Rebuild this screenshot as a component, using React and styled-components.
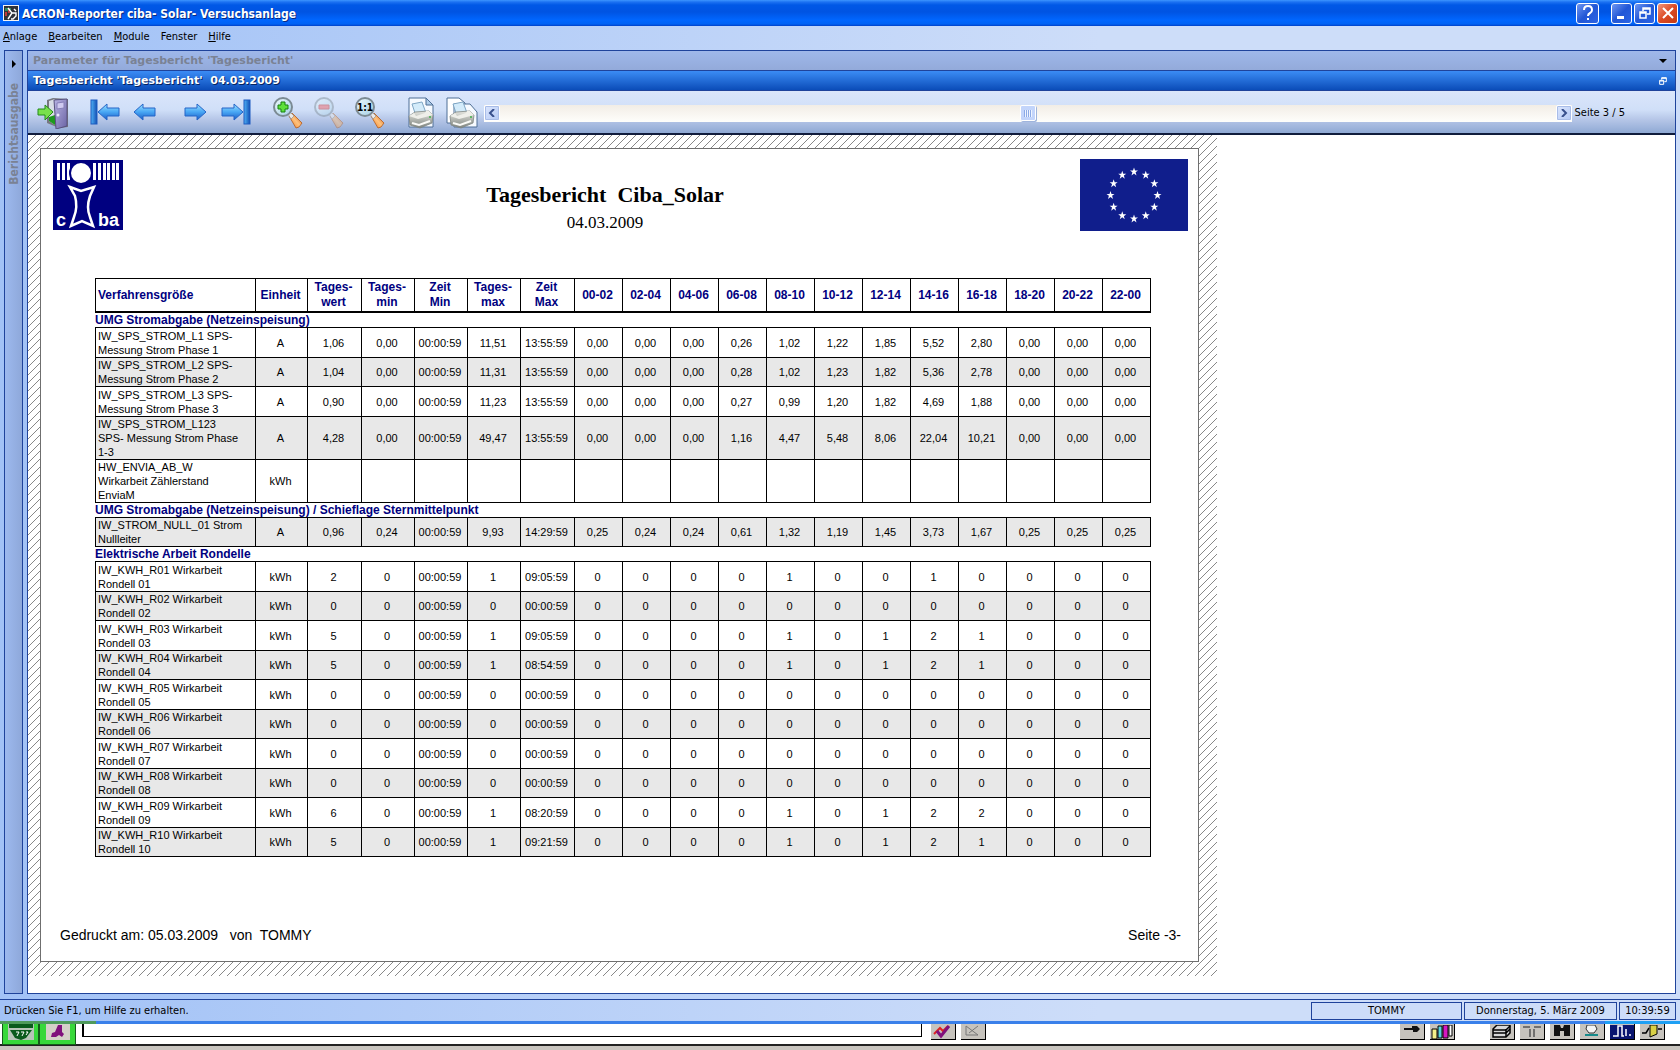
import React from "react";
import styled, { createGlobalStyle, css } from "styled-components";

const COLORS = {
  line: "#1f439b",
  navy: "#000080",
  shade: "#e8e8e8",
  muted: "#7a8294",
};
const UI_FONT = `"DejaVu Sans Condensed", "DejaVu Sans", sans-serif`;
const WIDE_FONT = `"DejaVu Sans", Verdana, sans-serif`;
const PRINT_FONT = `"Liberation Sans", Arial, sans-serif`;
const SERIF_FONT = `"Liberation Serif", "Times New Roman", serif`;

const menu = [
  { key: "A", rest: "nlage" },
  { key: "B", rest: "earbeiten" },
  { key: "M", rest: "odule" },
  { key: "", rest: "Fenster" },
  { key: "H", rest: "ilfe" },
];

const columns = [
  { label: ["Verfahrensgröße"], width: 161 },
  { label: ["Einheit"], width: 52 },
  { label: ["Tages-", "wert"], width: 54 },
  { label: ["Tages-", "min"], width: 53 },
  { label: ["Zeit", "Min"], width: 53 },
  { label: ["Tages-", "max"], width: 53 },
  { label: ["Zeit", "Max"], width: 54 },
  ...[
    "00-02",
    "02-04",
    "04-06",
    "06-08",
    "08-10",
    "10-12",
    "12-14",
    "14-16",
    "16-18",
    "18-20",
    "20-22",
    "22-00",
  ].map((h) => ({ label: [h], width: 48 })),
];

const empty = Array(17).fill("");

const groups = [
  {
    title: "UMG Stromabgabe (Netzeinspeisung)",
    rows: [
      {
        name: ["IW_SPS_STROM_L1 SPS-", "Messung Strom Phase 1"],
        unit: "A",
        values:
          "1,06 0,00 00:00:59 11,51 13:55:59 0,00 0,00 0,00 0,26 1,02 1,22 1,85 5,52 2,80 0,00 0,00 0,00".split(" "),
      },
      {
        name: ["IW_SPS_STROM_L2 SPS-", "Messung Strom Phase 2"],
        unit: "A",
        shaded: true,
        values:
          "1,04 0,00 00:00:59 11,31 13:55:59 0,00 0,00 0,00 0,28 1,02 1,23 1,82 5,36 2,78 0,00 0,00 0,00".split(" "),
      },
      {
        name: ["IW_SPS_STROM_L3 SPS-", "Messung Strom Phase 3"],
        unit: "A",
        values:
          "0,90 0,00 00:00:59 11,23 13:55:59 0,00 0,00 0,00 0,27 0,99 1,20 1,82 4,69 1,88 0,00 0,00 0,00".split(" "),
      },
      {
        name: ["IW_SPS_STROM_L123", "SPS- Messung Strom Phase", "1-3"],
        unit: "A",
        shaded: true,
        values:
          "4,28 0,00 00:00:59 49,47 13:55:59 0,00 0,00 0,00 1,16 4,47 5,48 8,06 22,04 10,21 0,00 0,00 0,00".split(" "),
      },
      {
        name: ["HW_ENVIA_AB_W", "Wirkarbeit Zählerstand", "EnviaM"],
        unit: "kWh",
        values: empty,
      },
    ],
  },
  {
    title: "UMG Stromabgabe (Netzeinspeisung) / Schieflage Sternmittelpunkt",
    rows: [
      {
        name: ["IW_STROM_NULL_01 Strom", "Nullleiter"],
        unit: "A",
        shaded: true,
        values:
          "0,96 0,24 00:00:59 9,93 14:29:59 0,25 0,24 0,24 0,61 1,32 1,19 1,45 3,73 1,67 0,25 0,25 0,25".split(" "),
      },
    ],
  },
  {
    title: "Elektrische Arbeit Rondelle",
    rows: [
      "2 0 00:00:59 1 09:05:59 0 0 0 0 1 0 0 1 0 0 0 0",
      "0 0 00:00:59 0 00:00:59 0 0 0 0 0 0 0 0 0 0 0 0",
      "5 0 00:00:59 1 09:05:59 0 0 0 0 1 0 1 2 1 0 0 0",
      "5 0 00:00:59 1 08:54:59 0 0 0 0 1 0 1 2 1 0 0 0",
      "0 0 00:00:59 0 00:00:59 0 0 0 0 0 0 0 0 0 0 0 0",
      "0 0 00:00:59 0 00:00:59 0 0 0 0 0 0 0 0 0 0 0 0",
      "0 0 00:00:59 0 00:00:59 0 0 0 0 0 0 0 0 0 0 0 0",
      "0 0 00:00:59 0 00:00:59 0 0 0 0 0 0 0 0 0 0 0 0",
      "6 0 00:00:59 1 08:20:59 0 0 0 0 1 0 1 2 2 0 0 0",
      "5 0 00:00:59 1 09:21:59 0 0 0 0 1 0 1 2 1 0 0 0",
    ].map((line, i) => {
      const no = String(i + 1).padStart(2, "0");
      return {
        name: [`IW_KWH_R${no} Wirkarbeit`, `Rondell ${no}`],
        unit: "kWh",
        shaded: i % 2 === 1,
        values: line.split(" "),
      };
    }),
  },
];

/* ================= ICONS ================== */

const AppIcon = () => (
  <svg width="16" height="16" viewBox="0 0 16 16" aria-hidden="true">
    <rect width="16" height="16" fill="#f4f4f4" />
    <rect x="1" y="1" width="14" height="14" fill="#30343a" />
    <path d="M2 3h6v3H2z" fill="#2f8a5c" />
    <path d="M2 7h2v4H2zM5 4h2v4H5z" fill="#c03a3a" />
    <path d="M5 3l4 5-4 6M9 8h4v3l-3 3H8M11 4l2 2" fill="none" stroke="#fff" strokeWidth="1.4" />
  </svg>
);

const Gradients = () => (
  <defs>
    <linearGradient id="blueArrow" x1="0" y1="0" x2="0" y2="1">
      <stop offset="0" stopColor="#9be2ff" />
      <stop offset="0.5" stopColor="#48a6f4" />
      <stop offset="1" stopColor="#1b5cc4" />
    </linearGradient>
    <linearGradient id="blueBar" x1="0" y1="0" x2="1" y2="0">
      <stop offset="0" stopColor="#4fb2f6" />
      <stop offset="1" stopColor="#1450b4" />
    </linearGradient>
    <linearGradient id="door" x1="0" y1="0" x2="1" y2="1">
      <stop offset="0" stopColor="#b9b4e4" />
      <stop offset="1" stopColor="#6a63a4" />
    </linearGradient>
    <linearGradient id="glass" x1="0" y1="0" x2="1" y2="1">
      <stop offset="0" stopColor="#edf8fc" />
      <stop offset="1" stopColor="#a5d0e6" />
    </linearGradient>
    <linearGradient id="handle" x1="0" y1="1" x2="1" y2="0">
      <stop offset="0" stopColor="#f0781a" />
      <stop offset="0.5" stopColor="#ffc27c" />
      <stop offset="1" stopColor="#c94f08" />
    </linearGradient>
    <linearGradient id="metal" x1="0" y1="0" x2="0" y2="1">
      <stop offset="0" stopColor="#e6e6e0" />
      <stop offset="1" stopColor="#7f8580" />
    </linearGradient>
  </defs>
);

const Exit = () => (
  <>
    <path d="M10 3l6-2 15 1v28l-9 1-12-5z" fill="#77777f" />
    <path d="M12 4l6-2v26l-6-4z" fill="#d8dde6" />
    <path d="M12 20l6-2v10l-6-4z" fill="#1d9a1d" />
    <path d="M17 3l13-1v27l-11 3z" fill="url(#door)" stroke="#58527f" />
    <path d="M20 6l7-1v6l-7 1z" fill="#cfcaf0" stroke="#8780b8" />
    <circle cx="21" cy="18" r="1.5" fill="#e9e6fa" />
    <path d="M1 12h7V8l8 7-8 8v-5H1z" fill="#79e04c" stroke="#258a1a" />
  </>
);
const Prev = () => (
  <path d="M14 7L5 15l9 8v-4h12v-8H14z" fill="url(#blueArrow)" stroke="#2565c8" />
);
const Next = () => (
  <path d="M17 7l9 8-9 8v-4H5v-8h12z" fill="url(#blueArrow)" stroke="#2565c8" />
);
const First = () => (
  <>
    <rect x="3" y="3" width="6" height="24" fill="url(#blueBar)" stroke="#1c5abf" />
    <path d="M19 7l-9 8 9 8v-4h12v-8H19z" fill="url(#blueArrow)" stroke="#2565c8" />
  </>
);
const Last = () => (
  <>
    <rect x="23" y="3" width="6" height="24" fill="url(#blueBar)" stroke="#1c5abf" />
    <path d="M13 7l9 8-9 8v-4H1v-8h12z" fill="url(#blueArrow)" stroke="#2565c8" />
  </>
);
const Lens = ({ children }) => (
  <>
    <path d="M17 19l3-3 10 10-3 4-3 1z" fill="url(#handle)" stroke="#b35a1c" strokeWidth="0.8" />
    <path d="M16 17l2-2 4 4-3 3z" fill="#e9e9e9" stroke="#888" strokeWidth="0.6" />
    <circle cx="11" cy="10" r="9" fill="url(#glass)" stroke="#7c8b94" strokeWidth="2" />
    {children}
  </>
);
const ZoomIn = () => (
  <Lens>
    <path d="M9 5h4v3h3v4h-3v3H9v-3H6V8h3z" fill="#5de03a" stroke="#16810f" />
  </Lens>
);
const ZoomOut = () => (
  <g opacity="0.45">
    <Lens>
      <path d="M6 8h10v4H6z" fill="#f25858" stroke="#c23030" />
    </Lens>
  </g>
);
const ZoomReset = () => (
  <Lens>
    <text x="11" y="14" textAnchor="middle" fontFamily={UI_FONT} fontWeight="700" fontSize="10">
      1:1
    </text>
  </Lens>
);
const PrinterBody = () => (
  <>
    <path d="M7 7l10-2 4 11-10 3z" fill="#d3ebfa" stroke="#7fa6c4" />
    <path d="M4 19l6-4 14-1 4 4-1 8-12 5-10-3z" fill="url(#metal)" stroke="#7f8581" strokeWidth="0.8" />
    <path d="M4 19l9 3 15-4-4-4-3 0-1 2-9 3-2-3z" fill="#efefea" />
    <path d="M7 26l7 2 11-4" fill="none" stroke="#fbfbf8" strokeWidth="2" />
    <circle cx="25" cy="20" r="1" fill="#41b04a" />
  </>
);
const Print = () => (
  <>
    <path d="M4 1h17l7 7v22H4z" fill="#f6faff" stroke="#4f6f96" />
    <path d="M21 1v7h7z" fill="#aecdea" stroke="#4f6f96" />
    <PrinterBody />
  </>
);
const PrintAll = () => (
  <>
    <path d="M1 1h12l6 5v20H1z" fill="#fff" stroke="#4f6f96" />
    <path d="M8 7h16l7 8v15H8z" fill="#f6faff" stroke="#4f6f96" />
    <PrinterBody />
  </>
);

const tools = [
  [{ title: "Schließen", icon: Exit }],
  [
    { title: "Erste Seite", icon: First },
    { title: "Vorherige Seite", icon: Prev },
  ],
  [
    { title: "Nächste Seite", icon: Next },
    { title: "Letzte Seite", icon: Last },
  ],
  [
    { title: "Vergrößern", icon: ZoomIn },
    { title: "Verkleinern", icon: ZoomOut },
    { title: "Originalgröße", icon: ZoomReset },
  ],
  [
    { title: "Seite drucken", icon: Print },
    { title: "Alles drucken", icon: PrintAll },
  ],
];

const RestoreGlyph = ({ size = 12 }) => (
  <svg width={size} height={size} viewBox="0 0 12 12" aria-hidden="true">
    <path d="M4 4V1h7v6H8M4 2h7M1 5h6v6H1zM1 6h6" fill="none" stroke="#fff" strokeWidth="1.5" />
  </svg>
);

const CibaLogo = () => (
  <svg width="70" height="70" viewBox="0 0 70 70" role="img" aria-label="ciba">
    <rect width="70" height="70" fill="#000080" />
    <g fill="#fff">
      {[4, 9, 14, 40, 45, 50, 54, 59, 63].map((x) => (
        <rect key={x} x={x} y="3" width="3" height="17" />
      ))}
      <circle cx="28" cy="13" r="12" fill="#000080" />
      <circle cx="28" cy="13" r="10" />
    </g>
    <path
      d="M17 27L28 31L41 27L37 36Q33 48 37 57L40 66L29 61L18 66L21 57Q25 47 22 36z"
      fill="none"
      stroke="#fff"
      strokeWidth="2.5"
    />
    <g fill="#fff" fontFamily={PRINT_FONT} fontWeight="700" fontSize="18">
      <text x="3" y="66">c</text>
      <text x="45" y="66">ba</text>
    </g>
  </svg>
);

const STAR = "0,-4 1,-1 4,-1 1.6,0.8 2.5,4 0,2 -2.5,4 -1.6,0.8 -4,-1 -1,-1";
const EuFlag = () => (
  <svg width="108" height="72" viewBox="0 0 108 72" role="img" aria-label="Europaflagge">
    <rect width="108" height="72" fill="#101e8c" />
    {Array.from({ length: 12 }, (_, i) => {
      const a = (i * Math.PI) / 6;
      return (
        <polygon
          key={i}
          points={STAR}
          fill="#fff"
          transform={`translate(${54 + 23.5 * Math.sin(a)} ${36 - 23.5 * Math.cos(a)})`}
        />
      );
    })}
  </svg>
);

// icons of the window behind, only their lower part is visible
const dockIcons = {
  chart: (
    <>
      <path d="M3 9l6-6 3 3 5-5" fill="none" stroke="#d22" strokeWidth="2" />
      <path d="M6 6l4 5 8-10" fill="none" stroke="#80107c" strokeWidth="3" />
    </>
  ),
  chartOff: <path d="M5 1v9h12M5 1l12 9M17 1l-9 7" fill="none" stroke="#777" />,
  key: <path d="M4 3h8V1h5l3 3-3 3h-4V5H4z" fill="#111" />,
  books: (
    <>
      <path d="M2 4h5v10H2z" fill="#f4f08a" stroke="#000" />
      <path d="M8 1h4v12H8z" fill="#57d6e0" stroke="#000" />
      <path d="M13 0h5v13h-5z" fill="#d618c0" stroke="#000" />
      <path d="M19 0h3v11h-3z" fill="#fff" stroke="#000" />
    </>
  ),
  printer: (
    <>
      <path d="M3 4l4-4h13v8l-4 4H3z" fill="#d8d8d8" stroke="#000" strokeWidth="1.5" />
      <path d="M3 5h13l4-4M3 8h13l4-4M16 4v8" fill="none" stroke="#000" strokeWidth="1.5" />
    </>
  ),
  cross: <path d="M3 2h7m4 0h7M10 4v8m4-8v8" fill="none" stroke="#555" strokeWidth="1.5" />,
  find: <path d="M4 0h6l1 3h2l1-3h6v11h-6V6h-4v5H4z" fill="#111" />,
  user: (
    <>
      <path d="M7 0h8l2 4-3 4H9L6 4z" fill="#f4f4f4" stroke="#333" />
      <path d="M5 10h13" stroke="#178a8a" strokeWidth="2" />
    </>
  ),
  pulse: (
    <>
      <path d="M0 0h24v14H0z" fill="#0a1670" />
      <path d="M3 11h5V1h4v10h2M16 4v7M20 9v2" fill="none" stroke="#fff" strokeWidth="1.5" />
    </>
  ),
  exit: (
    <>
      <path d="M10 0h7v9l-7 3z" fill="#d8d046" stroke="#000" />
      <path d="M2 8h4l3-5M18 4h4" fill="none" stroke="#000" strokeWidth="1.5" />
    </>
  ),
};

const DockIcon = ({ name, title }) => (
  <DockButton type="button" aria-label={title}>
    <svg width="24" height="14" viewBox="0 0 24 14" aria-hidden="true">
      {dockIcons[name]}
    </svg>
  </DockButton>
);

/* ================= REPORT ================== */

const Lines = ({ items }) =>
  items.map((text, i) => (
    <React.Fragment key={text}>
      {i > 0 && <br />}
      {text}
    </React.Fragment>
  ));

function Report() {
  return (
    <Paper>
      <PaperHead>
        <CibaLogo />
        <Heading>
          <h1>{"Tagesbericht  Ciba_Solar"}</h1>
          <p>04.03.2009</p>
        </Heading>
        <EuFlag />
      </PaperHead>
      <Table>
        <colgroup>
          {columns.map(({ width }, i) => (
            <col key={i} style={{ width }} />
          ))}
        </colgroup>
        <thead>
          <tr>
            {columns.map(({ label }, i) => (
              <HeadCell key={i} scope="col">
                <Lines items={label} />
              </HeadCell>
            ))}
          </tr>
        </thead>
        {groups.map(({ title, rows }) => (
          <tbody key={title}>
            <tr>
              <GroupCell colSpan={columns.length} scope="rowgroup">
                {title}
              </GroupCell>
            </tr>
            {rows.map(({ name, unit, shaded, values }) => (
              <Row key={name.join()} $shaded={shaded}>
                <td>
                  <Lines items={name} />
                </td>
                <td>{unit}</td>
                {values.map((value, i) => (
                  <td key={i}>{value}</td>
                ))}
              </Row>
            ))}
          </tbody>
        ))}
      </Table>
      <PaperFoot>
        <span>{"Gedruckt am: 05.03.2009   von  TOMMY"}</span>
        <span>Seite -3-</span>
      </PaperFoot>
    </Paper>
  );
}

function App() {
  return (
    <Window>
      <GlobalStyle />
      <TitleBar>
        <AppIcon />
        <h2>ACRON-Reporter ciba- Solar- Versuchsanlage</h2>
        <CaptionButton type="button" aria-label="Hilfe" $help>
          <svg width="12" height="16" viewBox="0 0 12 16" aria-hidden="true">
            <path d="M2 5Q2 1 6 1t4 4q0 2-2 3t-2 3" fill="none" stroke="#fff" strokeWidth="2" />
            <rect x="5" y="13" width="2" height="2" fill="#fff" />
          </svg>
        </CaptionButton>
        <CaptionButton type="button" aria-label="Minimieren">
          <svg width="14" height="14" viewBox="0 0 14 14" aria-hidden="true">
            <rect x="2" y="10" width="7" height="3" fill="#fff" />
          </svg>
        </CaptionButton>
        <CaptionButton type="button" aria-label="Wiederherstellen">
          <RestoreGlyph />
        </CaptionButton>
        <CaptionButton type="button" aria-label="Schließen" $close>
          <svg width="14" height="14" viewBox="0 0 14 14" aria-hidden="true">
            <path d="M2 2l10 10M12 2L2 12" stroke="#fff" strokeWidth="2" />
          </svg>
        </CaptionButton>
      </TitleBar>
      <MenuBar aria-label="Menü">
        {menu.map(({ key, rest }) => (
          <button key={rest} type="button">
            {key && <u>{key}</u>}
            {rest}
          </button>
        ))}
      </MenuBar>
      <Workspace>
        <SidePanel>
          <svg width="4" height="8" viewBox="0 0 4 8" aria-hidden="true">
            <path d="M0 0l4 4-4 4z" />
          </svg>
          <span>Berichtsausgabe</span>
        </SidePanel>
        <Main>
          <PanelTitle>
            <span>Parameter für Tagesbericht 'Tagesbericht'</span>
            <svg width="8" height="4" viewBox="0 0 8 4" aria-hidden="true">
              <path d="M0 0h8L4 4z" />
            </svg>
          </PanelTitle>
          <PanelTitle $active>
            <span>{"Tagesbericht 'Tagesbericht'  04.03.2009"}</span>
            <RestoreGlyph size={8} />
          </PanelTitle>
          <Toolbar>
            {tools.map((group, i) => (
              <ToolGroup key={i}>
                {group.map(({ title, icon: Icon }) => (
                  <ToolButton key={title} type="button" aria-label={title}>
                    <svg width="32" height="32" viewBox="0 0 32 32" aria-hidden="true">
                      <Gradients />
                      <Icon />
                    </svg>
                  </ToolButton>
                ))}
              </ToolGroup>
            ))}
            <Scroller>
              <ScrollButton type="button" aria-label="Seite zurück">
                <svg width="8" height="8" viewBox="0 0 8 8" aria-hidden="true">
                  <path d="M6 0L2 4l4 4" fill="none" stroke="#38508c" strokeWidth="2" />
                </svg>
              </ScrollButton>
              <PageRange
                type="range"
                min="1"
                max="5"
                defaultValue="3"
                aria-label="Seite"
              />
              <ScrollButton type="button" aria-label="Seite vor">
                <svg width="8" height="8" viewBox="0 0 8 8" aria-hidden="true">
                  <path d="M2 0l4 4-4 4" fill="none" stroke="#38508c" strokeWidth="2" />
                </svg>
              </ScrollButton>
            </Scroller>
            <PageLabel>Seite 3 / 5</PageLabel>
          </Toolbar>
          <Canvas>
            <Hatch>
              <Report />
            </Hatch>
          </Canvas>
        </Main>
      </Workspace>
      <StatusBar>
        <p>Drücken Sie F1, um Hilfe zu erhalten.</p>
        <StatusPane $width={151}>TOMMY</StatusPane>
        <StatusPane $width={153}>Donnerstag, 5. März 2009</StatusPane>
        <StatusPane $width={57}>10:39:59</StatusPane>
      </StatusBar>
      <WindowEdge />
      <Dock>
        <DockGreen>
          <button type="button" aria-label="Alarme">
            <svg width="26" height="16" viewBox="0 0 26 16" aria-hidden="true">
              <path d="M0 0h26v16H0z" fill="#b8c4b8" />
              <path d="M1 0h24v4H1zM2 6h22l-6 8-5 2-6-2z" fill="#0a5a1c" />
              <path d="M8 8h3l-2 4M13 8h3l-2 4M18 8h2l-2 3" fill="none" stroke="#fff" />
            </svg>
          </button>
          <button type="button" aria-label="Quittieren">
            <svg width="24" height="16" viewBox="0 0 24 16" aria-hidden="true">
              <path d="M0 0h24v16H0z" fill="#d4d0c8" />
              <path d="M12 1h4v7l2 2-2 3-3-2-3 2H5l1-4 3-1z" fill="#80107c" />
            </svg>
          </button>
        </DockGreen>
        <DockInput type="text" aria-label="Meldung" />
        <DockGroup>
          <DockIcon name="chart" title="Kurve" />
          <DockIcon name="chartOff" title="Kurve aus" />
        </DockGroup>
        <DockGroup $end>
          <DockIcon name="key" title="Anmelden" />
          <DockIcon name="books" title="Archiv" />
        </DockGroup>
        <DockGroup>
          <DockIcon name="printer" title="Drucken" />
          <DockIcon name="cross" title="Ausrichten" />
          <DockIcon name="find" title="Suchen" />
          <DockIcon name="user" title="Benutzer" />
          <DockIcon name="pulse" title="Signale" />
          <DockIcon name="exit" title="Beenden" />
        </DockGroup>
      </Dock>
    </Window>
  );
}

/* ================= STYLES ================== */

const GlobalStyle = createGlobalStyle`
  * {
    box-sizing: border-box;
  }
  body {
    margin: 0;
    font: 11px/14px ${UI_FONT};
    color: #000;
  }
  h1, h2, p {
    margin: 0;
  }
  button {
    border: 0;
    padding: 0;
    background: none;
    font: inherit;
    color: inherit;
  }
  svg {
    display: block;
    flex: none;
  }
`;

const Window = styled.div`
  display: flex;
  flex-direction: column;
  min-height: 100vh;
  background: linear-gradient(90deg, #a2c2f6, #cdddf9 1100px);
`;

const TitleBar = styled.header`
  display: flex;
  align-items: center;
  gap: 2px;
  height: 26px;
  padding: 0 2px 0 3px;
  background: linear-gradient(
    #3d95ff 0,
    #1c72f2 2px,
    #0058e6 5px,
    #0054e3 12px,
    #0066ff 20px,
    #0062f4 24px,
    #0040c8 26px
  );

  & h2 {
    flex: 1;
    padding: 1px 0 0 1px;
    color: #fff;
    font-size: 12px;
    line-height: 16px;
    text-shadow: 1px 1px 0 #0a2a80;
  }
`;

const CaptionButton = styled.button`
  display: flex;
  align-items: center;
  justify-content: center;
  width: 21px;
  height: 21px;
  border: 1px solid #fff;
  border-radius: 3px;
  background: linear-gradient(135deg, #6f97f2, #2257d6 50%, #2c64e4);
  ${({ $help }) =>
    $help &&
    css`
      width: 23px;
      margin-right: 10px;
    `}
  ${({ $close }) =>
    $close &&
    css`
      background: linear-gradient(135deg, #f0967c, #dc4a24 50%, #c43a14);
    `}
`;

const MenuBar = styled.nav`
  display: flex;
  align-items: center;
  gap: 11px;
  height: 24px;
  padding: 0 3px 2px;
`;

const Workspace = styled.div`
  display: flex;
  flex: 1;
  gap: 4px;
  padding: 0 4px 5px;
`;

const SidePanel = styled.aside`
  display: flex;
  flex-direction: column;
  align-items: center;
  gap: 15px;
  width: 19px;
  padding-top: 9px;
  border: 1px solid ${COLORS.line};
  background: linear-gradient(90deg, #9db9ee, #8ea8da);

  & span {
    writing-mode: vertical-rl;
    transform: rotate(180deg);
    color: ${COLORS.muted};
    font-size: 12px;
    font-weight: 700;
  }
`;

const Main = styled.main`
  display: flex;
  flex: 1;
  flex-direction: column;
  min-width: 0;
  border: 1px solid ${COLORS.line};
`;

const PanelTitle = styled.div`
  display: flex;
  align-items: center;
  justify-content: space-between;
  height: 20px;
  padding: 0 8px 0 5px;
  border-bottom: 1px solid ${COLORS.line};
  color: ${COLORS.muted};
  font-family: ${WIDE_FONT};
  font-weight: 700;
  white-space: pre;
  background: linear-gradient(#9fb8ea, #93aada);
  ${({ $active }) =>
    $active &&
    css`
      color: #fff;
      text-shadow: 1px 1px 0 #06235f;
      background: linear-gradient(#3b8cf5, #0b4cb8);
    `}
`;

const Toolbar = styled.div`
  display: flex;
  align-items: center;
  height: 44px;
  padding: 2px 50px 0 9px;
  border-bottom: 2px solid #101c3c;
  background: linear-gradient(#dbe6fb, #d0dff8 45%, #b3c4e6 70%, #8fa9d4);
`;

const ToolGroup = styled.div`
  display: flex;
  gap: 9px;
  margin-right: 19px;

  &:nth-last-child(3) {
    margin-right: 6px;
  }
`;

const ToolButton = styled.button`
  width: 32px;
  height: 32px;
`;

const Scroller = styled.div`
  display: flex;
  flex: 1;
  align-items: center;
  height: 17px;
  background: linear-gradient(#f2ede6, #fefefb);
`;

const ScrollButton = styled.button`
  display: flex;
  align-items: center;
  justify-content: center;
  width: 16px;
  height: 16px;
  border: 1px solid #fff;
  border-radius: 2px;
  outline: 1px solid #a9bde8;
  outline-offset: -2px;
  background: linear-gradient(135deg, #dbe6fe, #b4c9f4);
`;

const PageRange = styled.input`
  flex: 1;
  min-width: 0;
  height: 17px;
  margin: 0;
  appearance: none;
  background: none;

  &::-webkit-slider-thumb {
    appearance: none;
    width: 16px;
    height: 16px;
    border: 1px solid #fff;
    border-radius: 2px;
    background:
      repeating-linear-gradient(90deg, #8caae6 0 1px, #eef4ff 1px 2px) center / 8px 7px no-repeat,
      #c3d5fb;
    box-shadow: 1px 1px 0 #9fb4dc;
  }
`;

const PageLabel = styled.span`
  margin-left: 3px;
`;

const Canvas = styled.div`
  flex: 1;
  background: #fff;
`;

const Hatch = styled.div`
  width: max-content;
  padding: 13px 18px 14px 12px;
  background: linear-gradient(135deg, transparent 46%, #888 46% 54%, transparent 54%) 0 0 / 8px 8px;
`;

const Paper = styled.article`
  border: 1px solid #6f6f6f;
  background: #fff;
  font-family: ${PRINT_FONT};
`;

const PaperHead = styled.header`
  display: flex;
  justify-content: space-between;
  padding: 10px 10px 0 12px;

  & > :first-child {
    margin-top: 1px;
  }
`;

const Heading = styled.div`
  padding: 22px 0 0 7px;
  text-align: center;
  font-family: ${SERIF_FONT};
  white-space: pre;

  & h1 {
    font-size: 22px;
    line-height: 28px;
  }
  & p {
    font-size: 17px;
    line-height: 28px;
  }
`;

const Table = styled.table`
  width: 1056px;
  margin: 41px 47px 0 54px;
  border-spacing: 0;
  table-layout: fixed;
`;

const HeadCell = styled.th`
  height: 35px;
  padding: 0 2px 0 0;
  border: solid #000;
  border-width: 1px 1px 2px 0;
  color: ${COLORS.navy};
  font-size: 12px;
  line-height: 15px;

  &:first-child {
    padding-left: 2px;
    border-left-width: 1px;
    text-align: left;
  }
`;

const GroupCell = styled.th`
  height: 15px;
  padding: 0;
  border-bottom: 1px solid #000;
  color: ${COLORS.navy};
  font-size: 12px;
  line-height: 14px;
  text-align: left;
`;

const Row = styled.tr`
  height: ${({ $shaded }) => ($shaded ? 29 : 30)}px;
  background: ${({ $shaded }) => ($shaded ? COLORS.shade : "#fff")};

  & td {
    padding: 0 2px 0 0;
    border: solid #000;
    border-width: 0 1px 1px 0;
    text-align: center;
    white-space: nowrap;
  }
  & td:first-child {
    padding-left: 2px;
    border-left-width: 1px;
    text-align: left;
  }
`;

const PaperFoot = styled.footer`
  display: flex;
  justify-content: space-between;
  margin-top: 68px;
  padding: 0 17px 16px 19px;
  font-size: 14px;
  line-height: 20px;
  white-space: pre;
`;

const StatusBar = styled.footer`
  display: flex;
  align-items: center;
  gap: 2px;
  height: 22px;
  padding: 1px 4px 0;
  border-top: 1px solid ${COLORS.line};

  & p {
    flex: 1;
  }
`;

const StatusPane = styled.div`
  width: ${({ $width }) => $width}px;
  height: 18px;
  border: 1px solid ${COLORS.line};
  line-height: 16px;
  text-align: center;
`;

const WindowEdge = styled.div`
  height: 3px;
  background: linear-gradient(
    90deg,
    #4f9a5c 96px,
    #3a80ea 96px calc(100% - 75px),
    #1ea0f4 calc(100% - 75px)
  );
`;

const Dock = styled.div`
  display: flex;
  height: 26px;
  padding: 0 15px 0 2px;
  border-bottom: 4px solid #c9c5bf;
  background: linear-gradient(#fff 20px, #222 20px);
`;

const DockGreen = styled.div`
  display: flex;
  height: 21px;
  margin-right: 6px;

  & button {
    display: flex;
    justify-content: center;
    width: 37px;
    border: solid #145c1a;
    border-width: 0 1px 1px;
    background: #37d83a;
  }
`;

const DockInput = styled.input`
  width: calc(50% + 8px);
  height: 13px;
  border: solid #000;
  border-width: 0 1px 1px 2px;
  background: #fff;
`;

const DockGroup = styled.div`
  display: flex;
  gap: 5px;
  margin-left: ${({ $end }) => ($end ? "auto" : "9px")};

  &:last-child {
    margin-left: 35px;
  }
`;

const DockButton = styled.button`
  width: 25px;
  height: 16px;
  border: solid #000;
  border-width: 0 1px 1px 0;
  background: #c6c3bd;
`;

export default App;
